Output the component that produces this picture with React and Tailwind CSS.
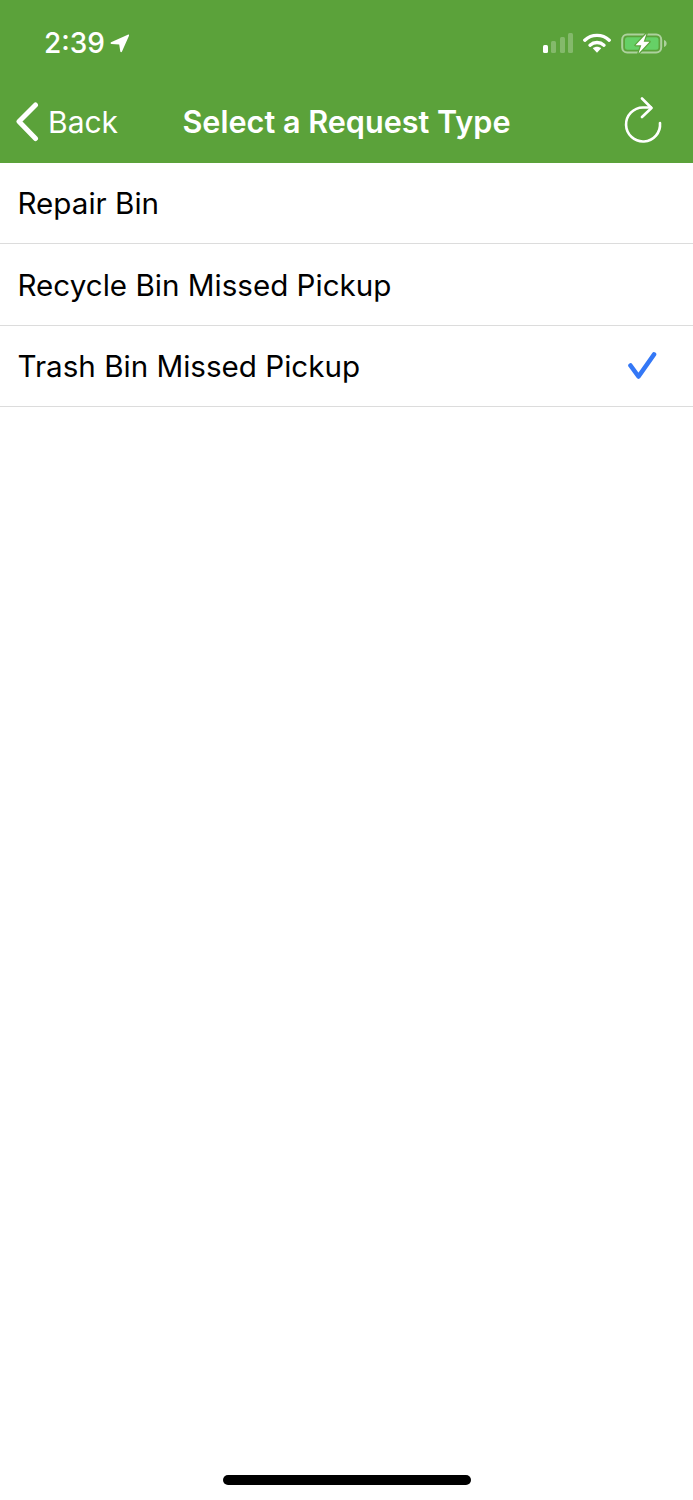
const requestTypes = [
  { name: "Repair Bin" },
  { name: "Recycle Bin Missed Pickup" },
  { name: "Trash Bin Missed Pickup", selected: true },
];

function LocationArrow() {
  return (
    <svg width="20" height="19" viewBox="0 0 20 19" fill="white">
      <path d="M1 8.200 17.800.7c.8-.3 1.500.3 1.200 1.100L12 17.600c-.4.9-1.500.8-1.700-.2L9.200 10.400 1.500 10c-1-.1-1.300-1.400-.5-1.800z" />
    </svg>
  );
}

function SignalBars() {
  return (
    <div className="flex items-end gap-[3.5px]">
      <div className="h-2 w-[5px] rounded-[1.5px] bg-white" />
      <div className="h-3 w-[5px] rounded-[1.5px] bg-white/25" />
      <div className="h-4 w-[5px] rounded-[1.5px] bg-white/25" />
      <div className="h-5 w-[5px] rounded-[1.5px] bg-white/25" />
    </div>
  );
}

function Wifi() {
  return (
    <svg width="28" height="20" viewBox="0 0 28 20" fill="none">
      <path d="M1.800 7.200C8.600.8 19.400.8 26.200 7.200" stroke="white" strokeWidth="3.400" strokeLinecap="round" />
      <path d="M7 12.200c4-3.600 10-3.600 14 0" stroke="white" strokeWidth="3.400" strokeLinecap="round" />
      <path d="M9.800 15.200c2.500-2 5.900-2 8.400 0l-4.200 4.600z" fill="white" />
    </svg>
  );
}

const BOLT = "M25.500 0.500 14.500 12.200h5.800l-2.800 8.300 11-11.800h-5.800z";

function Battery() {
  return (
    <svg width="46" height="21" viewBox="0 0 46 21" fill="none">
      <rect x="1.200" y="1.500" width="39" height="18" rx="5" stroke="white" strokeOpacity="0.5" strokeWidth="2" />
      <rect x="4" y="4.200" width="33.500" height="12.600" rx="2.500" fill="#66d066" />
      <path d="M43 7c1.600.5 2.600 1.800 2.600 3.500S44.600 13.500 43 14z" fill="white" fillOpacity="0.5" />
      <path d={BOLT} stroke="#5ba23a" strokeWidth="2.400" strokeLinejoin="round" />
      <path d={BOLT} fill="white" />
    </svg>
  );
}

function Chevron() {
  return (
    <svg width="24" height="40" viewBox="0 0 24 40" fill="none">
      <path d="M20.500 3 4 19.500 20.500 36.500" stroke="white" strokeWidth="5" strokeLinecap="round" strokeLinejoin="round" />
    </svg>
  );
}

function Refresh() {
  return (
    <svg width="38" height="49" viewBox="0 0 38 49" fill="none">
      <path d="M36 26A17 17 0 1 1 19 10.500H27" stroke="white" strokeWidth="2.600" strokeLinecap="round" />
      <path d="M18 1.500l9.500 9.500-9.500 9" stroke="white" strokeWidth="2.600" strokeLinecap="round" strokeLinejoin="round" />
    </svg>
  );
}

function Check() {
  return (
    <svg width="30" height="28" viewBox="0 0 30 28" fill="none">
      <path d="M3.500 13.500 11.500 24.500 27 2.500" stroke="#3478f6" strokeWidth="4.600" strokeLinecap="round" strokeLinejoin="round" />
    </svg>
  );
}

export default function App() {
  return (
    <div className="flex min-h-[1500px] flex-col bg-white font-['Inter',sans-serif] text-black">
      <header className="h-[163px] bg-[#5ba23a] text-white">
        {/* Status bar */}
        <div className="flex h-[82px] items-center justify-between pl-11 pr-[26px] pt-1">
          <div className="flex items-center gap-[5px]">
            <span className="text-[28px] font-medium leading-none">2:39</span>
            <LocationArrow />
          </div>
          <div className="flex items-center gap-[10px]">
            <SignalBars />
            <Wifi />
            <Battery />
          </div>
        </div>

        {/* Nav bar */}
        <div className="grid h-[81px] grid-cols-[1fr_auto_1fr] items-center pb-[2px]">
          <div className="flex items-center gap-[9px] pl-[15px]">
            <Chevron />
            <span className="text-[30px] leading-none">Back</span>
          </div>
          <h1 className="pt-[2px] text-[30.600px] font-semibold leading-none">Select a Request Type</h1>
          <div className="flex justify-end pr-[31px]">
            <Refresh />
          </div>
        </div>
      </header>

      <ul>
        {requestTypes.map((item) => (
          <li
            key={item.name}
            className="flex h-[81.330px] items-center justify-between border-b border-[#dcdcdc] pl-[17.500px] pr-[36px] pt-[1px] text-[29.600px]"
          >
            <span>{item.name}</span>
            {item.selected && <Check />}
          </li>
        ))}
      </ul>

      <div className="flex flex-1 items-end justify-center pb-[15px]">
        <div className="h-[10px] w-[248px] rounded-full bg-black" />
      </div>
    </div>
  );
}
